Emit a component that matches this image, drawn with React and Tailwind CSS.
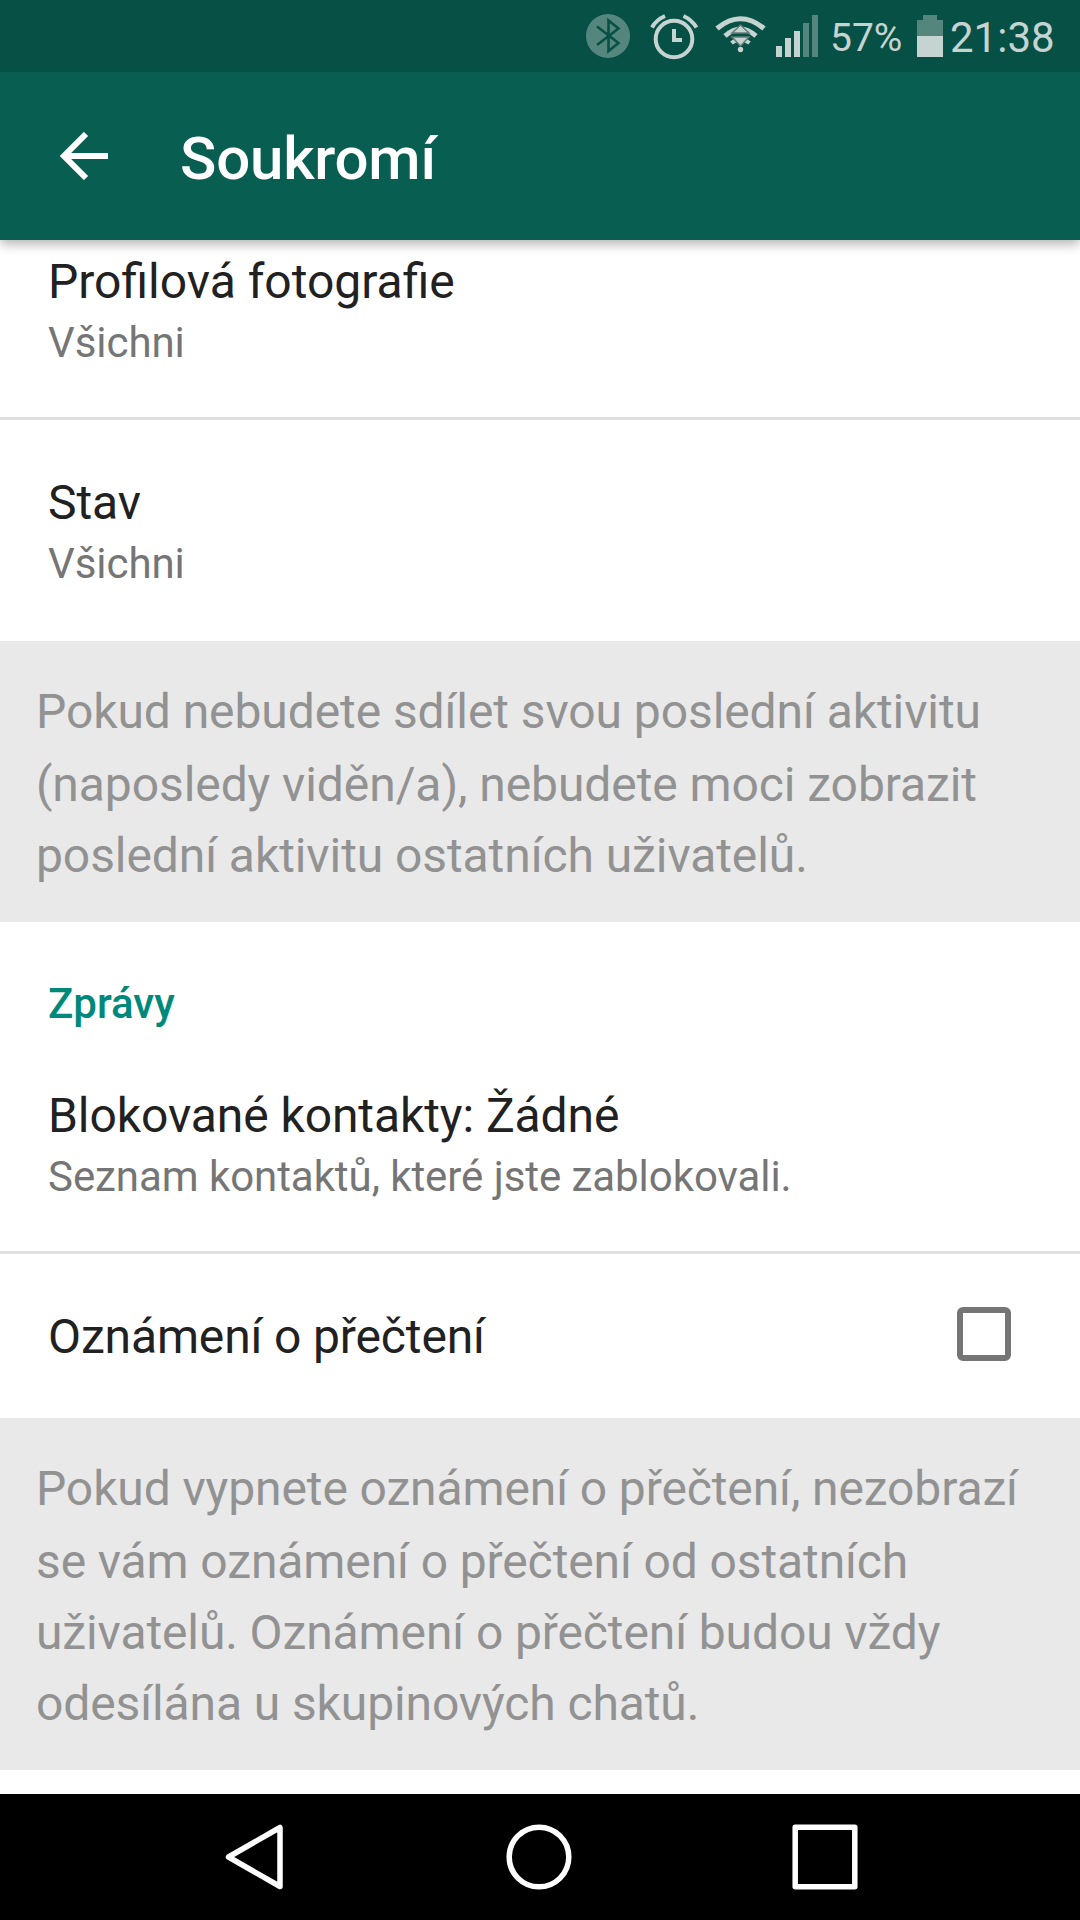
function StatusBar() {
  return (
    <div className="relative z-10 flex h-[72px] shrink-0 items-center bg-[#075045] pr-[25px] text-[#c5d4d1]">
      <svg className="ml-auto h-[72px] w-[240px] shrink-0" viewBox="580 0 240 72" fill="none">
        <circle cx="608" cy="36" r="22" fill="#54867e" />
        <path d="M597 26.500L618.500 43L608.500 51V20.500L618.500 28.500L597 45" stroke="#075045" strokeWidth="2.600" />
        <circle cx="674" cy="39" r="18.300" stroke="#c5d4d1" strokeWidth="4" />
        <path d="M672 29H676V38H682V42H672Z" fill="#c5d4d1" />
        <path d="M652 27.500Q656 20 665 16M683.500 16Q692 20 696.500 27.500" stroke="#c5d4d1" strokeWidth="4" />
        <g stroke="#c5d4d1">
          <path d="M717 28.500Q740.500 9 764 28.500" strokeWidth="5" />
          <path d="M725 36Q740.500 22 756 36" strokeWidth="5" />
          <path d="M731.500 43Q740.500 36 749.500 43" strokeWidth="4" />
        </g>
        <circle cx="740.500" cy="49.500" r="2.700" fill="#c5d4d1" />
        <path d="M732 33L740.500 25L749 33ZM732 37H749L740.500 46Z" fill="#c5d4d1" stroke="#617d78" strokeWidth="1.500" />
        <path d="M776 46H782V57H776ZM785 38H791V57H785ZM794 31H800V57H794Z" fill="#c5d4d1" />
        <path d="M803 23H809V57H803ZM812 15H818V57H812Z" fill="#54867e" />
      </svg>
      <span className="ml-[10px] w-[87px] whitespace-nowrap pt-1 text-[39px] leading-[72px]">57%</span>
      <svg className="h-[72px] w-[26px] shrink-0" viewBox="917 0 26 72">
        <path d="M917 20H923V15H937V20H943V36H917Z" fill="#54867e" />
        <path d="M917 36H943V57H917Z" fill="#c5d4d1" />
      </svg>
      <span className="ml-[7px] w-[105px] whitespace-nowrap pt-[3px] text-[42px] leading-[72px]">21:38</span>
    </div>
  );
}

function Setting({ title, detail, tracking = "tracking-[-0.080px]" }) {
  return (
    <div className="pl-12">
      <div className={`text-[48px] leading-[60px] text-[#212121] ${tracking}`}>{title}</div>
      <div className="pt-px text-[42px] leading-[60px] tracking-[-0.060px] text-[#757575]">{detail}</div>
    </div>
  );
}

function Note({ lines, className }) {
  return (
    <div className={`shrink-0 bg-[#e9e9e9] pl-9 pt-[35px] text-[48px] leading-[71px] text-[#929292] ${className}`}>
      {lines.map((line) => (
        <div key={line} className="whitespace-nowrap first:mb-[2px]">{line}</div>
      ))}
    </div>
  );
}

export default function App() {
  return (
    <div className="flex h-[1920px] w-[1080px] flex-col overflow-hidden bg-white font-['Roboto',sans-serif]">
      <StatusBar />
      <header className="relative flex h-[168px] shrink-0 items-center bg-[#095e52] shadow-[0_4px_11px_rgba(0,0,0,0.3)]">
        <svg className="ml-[60px] h-[48px] w-[48px]" viewBox="0 0 48 48" fill="none" stroke="white" strokeWidth="6">
          <path d="M26 2L4 24L26 46M4 24H48" />
        </svg>
        <h1 className="ml-[72px] pt-[5px] text-[60px] font-medium leading-[72px] tracking-[-0.200px] text-white">Soukromí</h1>
      </header>

      <section className="h-[177px] shrink-0 pt-[12px]">
        <Setting title="Profilová fotografie" detail="Všichni" tracking="tracking-normal" />
      </section>
      <section className="h-[224px] shrink-0 border-t-[3px] border-[#e0e0e0] pt-[53px]">
        <Setting title="Stav" detail="Všichni" />
      </section>
      <Note
        className="h-[281px] tracking-[-0.080px]"
        lines={["Pokud nebudete sdílet svou poslední aktivitu", "(naposledy viděn/a), nebudete moci zobrazit", "poslední aktivitu ostatních uživatelů."]}
      />
      <section className="h-[329px] shrink-0">
        <h2 className="pl-12 pt-[52px] text-[42px] font-medium leading-[60px] text-[#00897b]">Zprávy</h2>
        <div className="pt-[52px]">
          <Setting title="Blokované kontakty: Žádné" detail="Seznam kontaktů, které jste zablokovali." />
        </div>
      </section>
      <section className="flex h-[167px] shrink-0 items-center justify-between border-t-[3px] border-[#e0e0e0] pl-12 pr-[69px]">
        <span className="pt-[2px] text-[48px] leading-[60px] tracking-[-0.140px] text-[#212121]">Oznámení o přečtení</span>
        <div role="checkbox" aria-checked="false" className="mb-[4px] size-[54px] rounded-[6px] border-[6px] border-[#757575]" />
      </section>
      <Note
        className="h-[352px] tracking-[-0.110px]"
        lines={["Pokud vypnete oznámení o přečtení, nezobrazí", "se vám oznámení o přečtení od ostatních", "uživatelů. Oznámení o přečtení budou vždy", "odesílána u skupinových chatů."]}
      />

      <nav className="mt-auto flex h-[126px] shrink-0 items-center bg-black">
        <svg className="ml-[225px] h-[66px] w-[58px]" viewBox="0 0 58 66" fill="none" stroke="white" strokeWidth="5.500" strokeLinejoin="round">
          <path d="M55 3.500V62.500L3.500 33Z" />
        </svg>
        <svg className="ml-[223px] h-[66px] w-[66px]" viewBox="0 0 66 66" fill="none" stroke="white" strokeWidth="5.500">
          <circle cx="33" cy="33" r="29.800" />
        </svg>
        <svg className="ml-[220px] h-[66px] w-[66px]" viewBox="0 0 66 66" fill="none" stroke="white" strokeWidth="5.500" strokeLinejoin="round">
          <path d="M3.200 3.200H62.800V62.800H3.200Z" />
        </svg>
      </nav>
    </div>
  );
}
